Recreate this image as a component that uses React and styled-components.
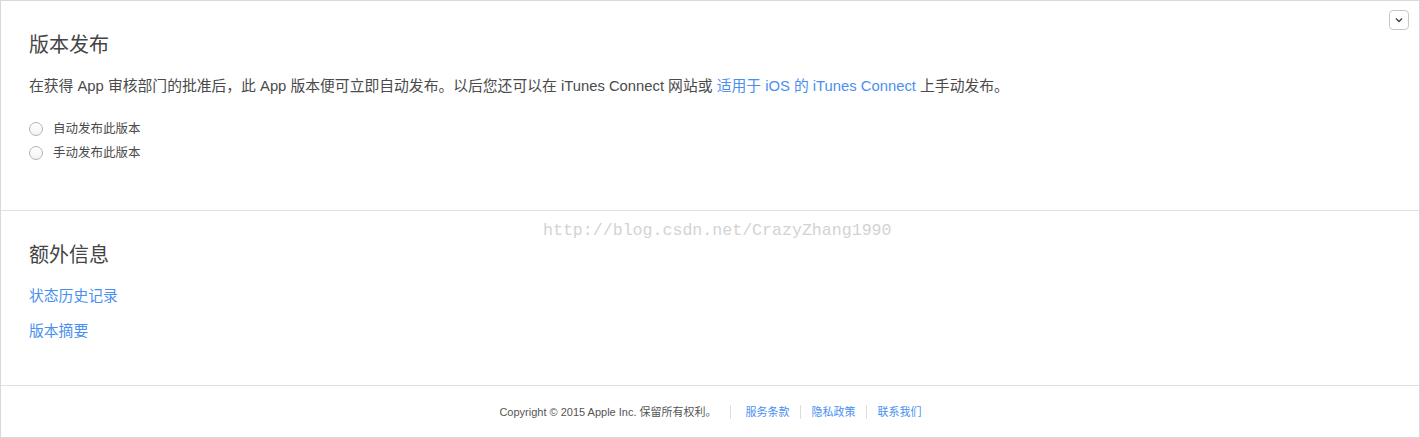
import React from "react";
import styled, { createGlobalStyle } from "styled-components";

const GlobalStyle = createGlobalStyle`
  html, body {
    margin: 0;
    padding: 0;
    background: #ffffff;
  }
  body {
    font-family: "Liberation Sans", "Noto Sans CJK SC", sans-serif;
    color: #444444;
  }
`;

const Page = styled.div`
  position: relative;
  width: 1420px;
  height: 438px;
  box-sizing: border-box;
  border: 1px solid #d9d9d9;
  display: flex;
  flex-direction: column;
`;

const Section = styled.section`
  box-sizing: border-box;
  height: ${(props) => props.height}px;
  padding: 30px 28px 0;
  border-bottom: 1px solid #e0e0e0;
`;

const Title = styled.h2`
  margin: 0;
  font-size: 20px;
  font-weight: 400;
  line-height: 28px;
  color: #444;
`;

const Paragraph = styled.p`
  margin: 17px 0 0;
  font-size: 14.8px;
  line-height: 20px;
  color: #4a4a4a;
`;

const Link = styled.a`
  color: #4a8ff0;
  text-decoration: none;
  cursor: pointer;
`;

const RadioList = styled.div`
  margin-top: 24px;
  display: flex;
  flex-direction: column;
  gap: 6px;
`;

const RadioRow = styled.label`
  display: flex;
  align-items: center;
  gap: 10px;
  font-size: 12.5px;
  line-height: 18px;
  color: #4a4a4a;
`;

const RadioCircle = styled.span`
  width: 12px;
  height: 12px;
  border-radius: 50%;
  border: 1px solid #b5b5b5;
  background: linear-gradient(#ffffff, #f3f3f3);
`;

const LinkList = styled.div`
  margin-top: 17px;
  display: flex;
  flex-direction: column;
  gap: 14px;
  font-size: 14.8px;
  line-height: 21px;
`;

const CollapseButton = styled.button`
  position: absolute;
  top: 9px;
  right: 10px;
  width: 20px;
  height: 20px;
  padding: 0;
  border: 1px solid #c8c8c8;
  border-radius: 4px;
  background: #ffffff;
  display: flex;
  align-items: center;
  justify-content: center;
`;

const Footer = styled.footer`
  flex: 1;
  display: flex;
  align-items: center;
  justify-content: center;
  font-size: 11px;
  color: #555;
  padding-left: 1px;
`;

const FooterItem = styled.span`
  padding-left: ${(props) => props.left || 0}px;
  padding-right: ${(props) => props.right || 0}px;
  border-left: ${(props) => (props.left ? "1px solid #dedede" : "none")};
  line-height: 14px;
`;

const Watermark = styled.div`
  position: absolute;
  top: 220px;
  left: 542px;
  font-family: "Liberation Mono", "DejaVu Sans Mono", monospace;
  font-size: 16.6px;
  color: #d3d3d3;
  pointer-events: none;
`;

export default function App() {
  return (
    <>
      <GlobalStyle />
      <Page>
        <CollapseButton aria-label="collapse">
          <svg width="8" height="6" viewBox="0 0 8 6">
            <path d="M1 1.5 L4 4.5 L7 1.5" fill="none" stroke="#444" strokeWidth="1.4" />
          </svg>
        </CollapseButton>
        <Section height={210}>
          <Title>版本发布</Title>
          <Paragraph>
            在获得 App 审核部门的批准后，此 App 版本便可立即自动发布。以后您还可以在 iTunes Connect 网站或{" "}
            <Link>适用于 iOS 的 iTunes Connect</Link> 上手动发布。
          </Paragraph>
          <RadioList>
            <RadioRow>
              <RadioCircle />
              自动发布此版本
            </RadioRow>
            <RadioRow>
              <RadioCircle />
              手动发布此版本
            </RadioRow>
          </RadioList>
        </Section>
        <Section height={175}>
          <Title>额外信息</Title>
          <LinkList>
            <Link>状态历史记录</Link>
            <Link>版本摘要</Link>
          </LinkList>
        </Section>
        <Footer>
          <FooterItem right={13}>Copyright © 2015 Apple Inc. 保留所有权利。</FooterItem>
          <FooterItem left={15} right={10}>
            <Link>服务条款</Link>
          </FooterItem>
          <FooterItem left={11} right={10}>
            <Link>隐私政策</Link>
          </FooterItem>
          <FooterItem left={11}>
            <Link>联系我们</Link>
          </FooterItem>
        </Footer>
        <Watermark>http://blog.csdn.net/CrazyZhang1990</Watermark>
      </Page>
    </>
  );
}
